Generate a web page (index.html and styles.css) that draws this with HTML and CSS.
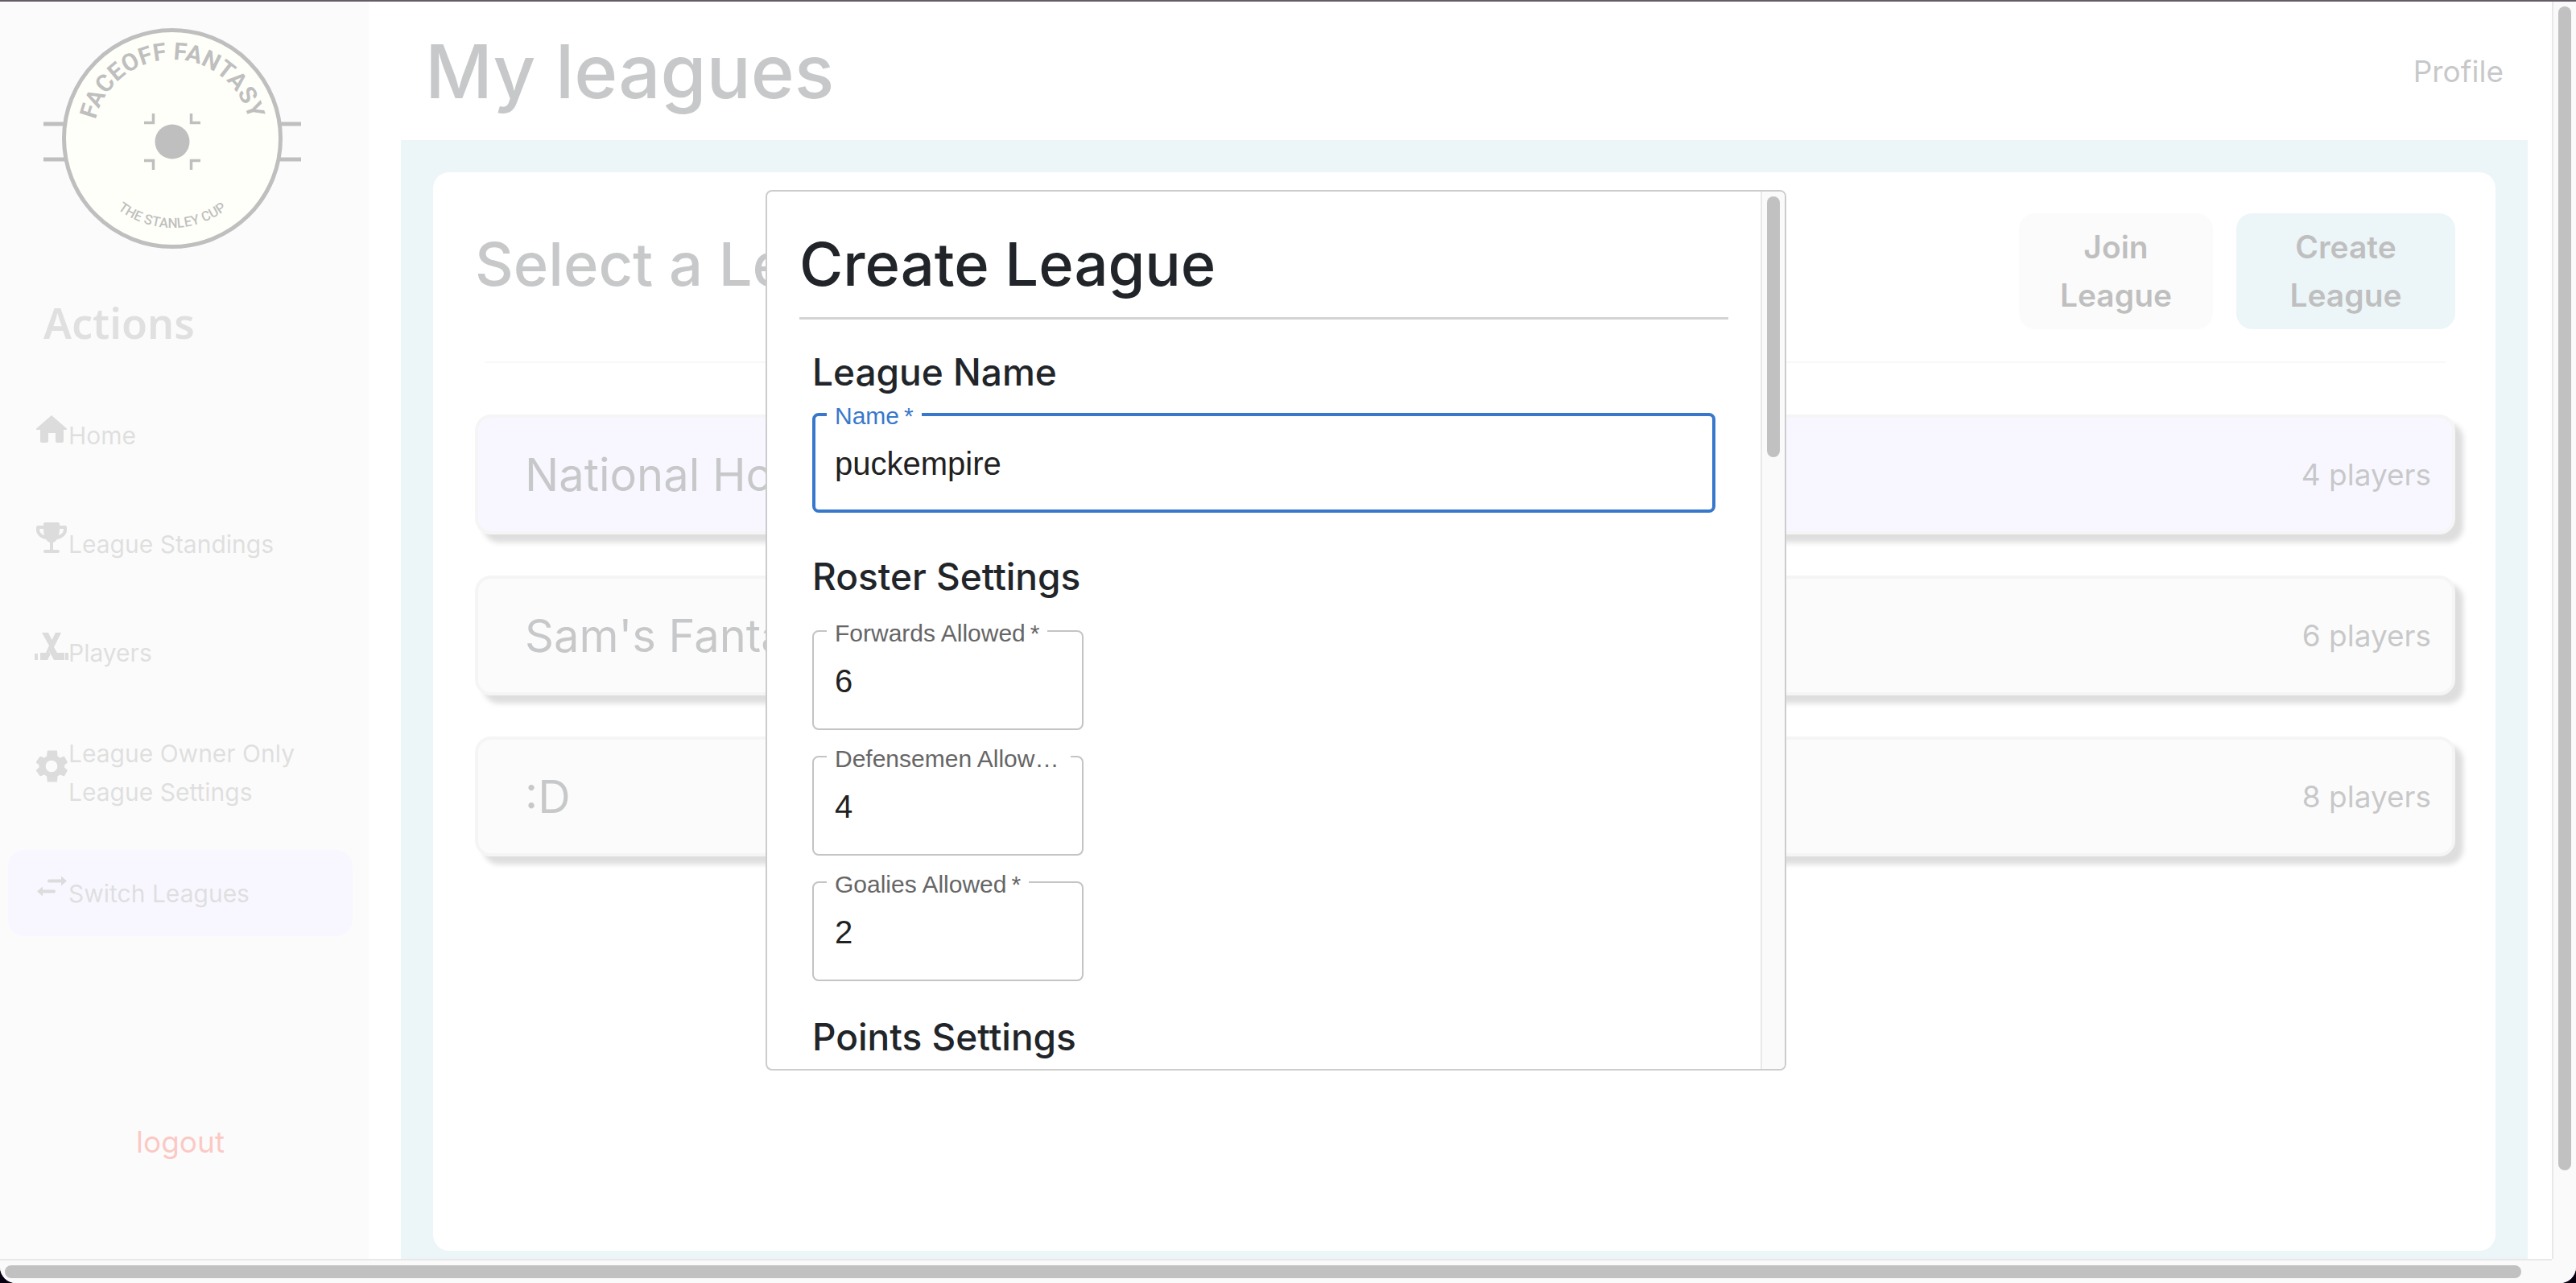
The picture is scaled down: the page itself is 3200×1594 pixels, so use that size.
FILE: index.html
```html
<!DOCTYPE html>
<html lang="en">
<head>
  <meta charset="UTF-8">
  <meta name="viewport" content="width=device-width, initial-scale=1.0">
  <title>Faceoff Fantasy - My leagues</title>
  <link rel="stylesheet" href="styles.css">
</head>
<body>
  <div class="window">
    <div class="viewport">

      <!-- Sidebar -->
      <aside class="sidebar">
        <svg class="logo" viewBox="0 0 320 274" role="img" aria-label="Faceoff Fantasy">
          <defs>
            <path id="arc-top" d="M62 137a98 98 0 0 1 196 0" />
            <path id="arc-bottom" d="M49 137a111 111 0 0 0 222 0" />
          </defs>
          <path d="M0 119h320M0 163h320" stroke="#000" stroke-width="5" />
          <circle cx="160" cy="137" r="134.5" fill="#ffffe7" stroke="#000" stroke-width="5" />
          <circle cx="160" cy="141" r="21.5" />
          <path d="M125 117.500h11.500V106M195 117.500h-11.500V106M125 164.500h11.500V176M195 164.500h-11.500V176" fill="none" stroke="#000" stroke-width="3.500" />
          <text class="logo-name" text-anchor="middle"><textPath href="#arc-top" startOffset="50%">FACEOFF FANTASY</textPath></text>
          <text class="logo-cup" text-anchor="middle"><textPath href="#arc-bottom" startOffset="50%">THE STANLEY CUP</textPath></text>
        </svg>

        <h3>Actions</h3>

        <nav class="actions">
          <a href="#home">
            <svg viewBox="0 0 42 42"><path d="M21 4 40 20.500q.5 1.500-1 1.500h-3v14q0 2-2 2h-6q-2 0-2-2V26H17v10q0 2-2 2H9q-2 0-2-2V22H3q-1.500 0-1-1.500z" /></svg>
            <span>Home</span>
          </a>
          <a href="#standings">
            <svg viewBox="0 0 42 42"><path fill-rule="evenodd" d="M13 2h16q2 0 2 2v2h7q2 0 2 3v2c0 7-6 11-12 12q-2 3-5 4v9h6q2 0 2 2t-2 2H13q-2 0-2-2t2-2h6v-9q-3-1-5-4C8 22 2 18 2 11V9q0-3 2-3h7V4q0-2 2-2zM6 10c0 5 3 7 6 8q-1-4-1-8zm25 0q0 4-1 8c3-1 6-3 6-8z" /></svg>
            <span>League Standings</span>
          </a>
          <a href="#players">
            <svg viewBox="0 0 42 42"><path d="M9 4h8l4.500 9L26 4h7l-9 18 4 7h9v9H24l-7-13L19.500 31 16 38H7v-9h7l4-9zM0 30h4v8H0zM38 29h4v9h-4z" /></svg>
            <span>Players</span>
          </a>
          <a href="#settings">
            <svg viewBox="0 0 24 24"><path d="M21.200 12.900c0-.3.1-.6.1-.9s0-.6-.1-.9l2-1.600c.2-.1.2-.4.1-.6l-2.100-3.700c-.1-.2-.4-.3-.6-.2l-2.600 1c-.5-.4-1.100-.7-1.700-1L16 1.300c0-.2-.2-.4-.5-.4h-6c-.3 0-.5.2-.5.4L8.600 5c-.6.3-1.200.6-1.700 1l-2.600-1c-.2-.1-.5 0-.6.2L1.100 8.900c-.1.2-.1.5.1.6l2 1.600c0 .3-.1.6-.1.9s0 .6.1.9l-2 1.600c-.2.1-.2.4-.1.6l2.600 3.700c.1.200.4.300.6.200l2.600-1c.5.400 1.100.700 1.700 1l.4 3.700c0 .2.200.4.500.4h6c.3 0 .5-.2.5-.4l.3-3.700c.6-.3 1.200-.6 1.700-1l2.600 1c.2.1.5 0 .6-.2l2.100-3.700c.1-.2.1-.5-.1-.6zM12 16.200a4.200 4.200 0 1 1 0-8.400 4.200 4.200 0 0 1 0 8.400z" /></svg>
            <span>League Owner Only League Settings</span>
          </a>
          <a href="#switch" class="current">
            <svg viewBox="0 0 42 42"><path d="M18 11.500h15V7.500l7 6-7 6v-4H18q-2 0-2-2t2-2zM24 24.500H10v-4l-7 6 7 6v-4h14q2 0 2-2t-2-2z" /></svg>
            <span>Switch Leagues</span>
          </a>
        </nav>

        <button type="button" class="logout">logout</button>
      </aside>

      <!-- Leagues page -->
      <main class="page">
        <header class="page-header">
          <h1>My leagues</h1>
          <a href="#profile" class="profile">Profile</a>
        </header>

        <div class="page-content">
          <section class="card">
            <div class="card-header">
              <h2>Select a League</h2>
              <div class="card-buttons">
                <button type="button" class="btn join">Join League</button>
                <button type="button" class="btn create">Create League</button>
              </div>
            </div>
            <hr>
            <div class="league-list">
              <a href="#league1" class="league selected">
                <span class="league-name">National Hockey</span>
                <span>4 players</span>
              </a>
              <a href="#league2" class="league">
                <span class="league-name">Sam's Fantasy</span>
                <span>6 players</span>
              </a>
              <a href="#league3" class="league">
                <span class="league-name">:D</span>
                <span>8 players</span>
              </a>
            </div>
          </section>
        </div>
      </main>

      <!-- Create league modal -->
      <div class="overlay">
        <div class="modal" role="dialog" aria-labelledby="modal-title">
          <div class="modal-body">
            <h2 id="modal-title">Create League</h2>
            <hr>
            <form>
              <h4>League Name</h4>
              <div class="field focused">
                <label for="name">Name&#8201;*</label>
                <input type="text" id="name" value="puckempire">
              </div>

              <h4>Roster Settings</h4>
              <div class="roster">
                <div class="field">
                  <label for="forwards">Forwards Allowed&#8201;*</label>
                  <input type="text" inputmode="numeric" id="forwards" value="6">
                </div>
                <div class="field">
                  <label for="defensemen">Defensemen Allowed&#8201;*</label>
                  <input type="text" inputmode="numeric" id="defensemen" value="4">
                </div>
                <div class="field">
                  <label for="goalies">Goalies Allowed&#8201;*</label>
                  <input type="text" inputmode="numeric" id="goalies" value="2">
                </div>
              </div>

              <h4>Points Settings</h4>
            </form>
          </div>
          <div class="scrollbar vertical"><div class="thumb modal-thumb"></div></div>
        </div>
      </div>
    </div>

    <div class="scrollbar vertical"><div class="thumb page-thumb"></div></div>
    <div class="scrollbar horizontal"><div class="thumb wide-thumb"></div></div>
    <div class="scroll-corner"></div>
  </div>
</body>
</html>
```
FILE: styles.css
```css
* {
  box-sizing: border-box;
}

body {
  margin: 0;
  background: #080010;
  color: #212529;
  font-family: Inter, "Liberation Sans", sans-serif;
  font-size: 37px;
  line-height: 60px;
}

h1, h2, h3, h4 {
  margin: 0;
  font-weight: 500;
}

a {
  color: inherit;
  text-decoration: none;
}

button {
  border: none;
  font-family: inherit;
  font-size: inherit;
  line-height: inherit;
}

/* Window */
.window {
  display: grid;
  grid-template-columns: minmax(0, 1fr) 30px;
  grid-template-rows: minmax(0, 1fr) 30px;
  height: 100vh;
  border-top: 2px solid #625d66;
  border-radius: 0 0 20px 20px;
  background: #fff;
  overflow: hidden;
}

.viewport {
  position: relative;
  display: flex;
  overflow: hidden;
}

/* Sidebar */
.sidebar {
  flex: 0 0 458px;
  display: flex;
  flex-direction: column;
  padding: 33px 20px 0 10px;
  background: #efefef;
}

.logo {
  width: 320px;
  height: 274px;
  margin-left: 44px;
}

.logo text {
  font-family: Roboto, sans-serif;
}

.logo-name {
  font-size: 30px;
  font-weight: 700;
}

.logo-cup {
  font-size: 17px;
  font-weight: 500;
}

.sidebar h3 {
  margin: 60px 0 54px 44px;
  color: #838383;
  font-family: "Noto Sans", sans-serif;
  font-size: 52px;
  font-weight: 600;
  line-height: 64px;
}

.actions {
  display: flex;
  flex-direction: column;
  gap: 28px;
}

.actions a {
  display: flex;
  align-items: center;
  min-height: 107px;
  padding: 20px 34px 20px 33px;
  border-radius: 20px;
  color: #7f7f7f;
  font-size: 30px;
  line-height: 48px;
}

.actions a.current {
  background: #e3dfff;
}

.actions svg {
  flex: none;
  width: 42px;
  height: 42px;
  margin-bottom: 16px;
  fill: #737373;
}

.logout {
  margin-top: 226px;
  padding: 0;
  background: none;
  color: #ef2b17;
}

/* Page */
.page {
  flex: 1;
  display: flex;
  flex-direction: column;
  padding: 0 30px 0 40px;
}

.page-header {
  display: flex;
  justify-content: space-between;
  align-items: center;
  height: 172px;
  padding: 2px 30px 0;
}

.page-header h1 {
  font-size: 92px;
  line-height: 120px;
}

.page-content {
  flex: 1;
  display: flex;
  padding: 40px 40px 10px;
  background: #b3d7e3;
}

.card {
  flex: 1;
  padding: 51px 50px 51px 52px;
  border-radius: 20px;
  background: #fff;
}

.card-header {
  display: flex;
  justify-content: space-between;
}

.card-header h2 {
  font-size: 74px;
  line-height: 126px;
}

.card-buttons {
  display: flex;
  gap: 29px;
}

.btn {
  padding: 12px 40px;
  border-radius: 20px;
  color: #000;
  font-size: 39px;
  font-weight: 600;
}

.join {
  width: 241px;
  background: #efefef;
}

.create {
  width: 272px;
  background: #b3d7e3;
}

.card hr {
  height: 2px;
  margin: 40px 12px 64px;
  border: none;
  background: #e3e3e3;
}

.league-list {
  display: flex;
  flex-direction: column;
  gap: 51px;
}

.league {
  display: flex;
  justify-content: space-between;
  align-items: center;
  height: 149px;
  padding: 0 26px 0 58px;
  border: 4px solid #d7d7d7;
  border-radius: 20px;
  background: #efefef;
  box-shadow: 10px 10px 6px #7b7b7b;
}

.league.selected {
  background: #e3dfff;
}

.league-name {
  font-size: 56px;
}

/* Modal */
.overlay {
  position: absolute;
  inset: 0;
  background: rgba(255, 255, 255, 0.75);
}

.modal {
  position: absolute;
  inset: 15% 30%;
  display: flex;
  border: 2px solid #ccc;
  border-radius: 8px;
  background: #fff;
  overflow: hidden;
}

.modal-body {
  flex: 1;
  padding: 42px 40px 0;
  overflow: hidden;
}

.modal-body h2 {
  font-size: 74px;
  line-height: 96px;
}

.modal-body hr {
  height: 3px;
  margin: 18px 0 36px;
  border: none;
  background: #d3d3d3;
}

form {
  padding: 0 16px;
}

form h4 {
  margin-bottom: 22px;
  font-size: 46px;
  line-height: 58px;
}

.field {
  position: relative;
  margin-bottom: 50px;
  font-family: "Liberation Sans", Arial, sans-serif;
}

/* Label sits on top of the input border */
.field label {
  position: absolute;
  top: -14px;
  left: 18px;
  max-width: calc(100% - 34px);
  padding: 0 10px;
  background: #fff;
  color: #666;
  font-size: 30px;
  line-height: 36px;
  white-space: nowrap;
  overflow: hidden;
  text-overflow: ellipsis;
}

.field input {
  display: block;
  width: 100%;
  height: 124px;
  padding: 2px 26px 0;
  border: 2px solid #c4c4c4;
  border-radius: 8px;
  background: #fff;
  color: #212121;
  font-family: inherit;
  font-size: 40px;
  outline: none;
}

.field.focused input {
  padding: 2px 24px 0;
  border: 4px solid #3878cc;
}

.field.focused label {
  color: #3878cc;
}

.roster {
  display: flex;
  flex-direction: column;
  gap: 32px;
  padding-top: 16px;
  margin-bottom: 40px;
}

.roster .field {
  width: 337px;
  margin: 0;
}

/* Scrollbars */
.scrollbar {
  background: #fafafa;
}

.scrollbar.vertical {
  width: 30px;
  padding: 6px;
  border-left: 2px solid #e8e8e8;
}

.scrollbar.horizontal {
  padding: 6px;
  border-top: 2px solid #e8e8e8;
}

.scroll-corner {
  background: #fafafa;
}

.thumb {
  border-radius: 8px;
  background: #c1c1c1;
}

.vertical .thumb {
  width: 16px;
}

.page-thumb {
  height: calc(100% - 104px);
}

.modal-thumb {
  height: 30%;
}

.wide-thumb {
  width: 99%;
  height: 16px;
}
```
